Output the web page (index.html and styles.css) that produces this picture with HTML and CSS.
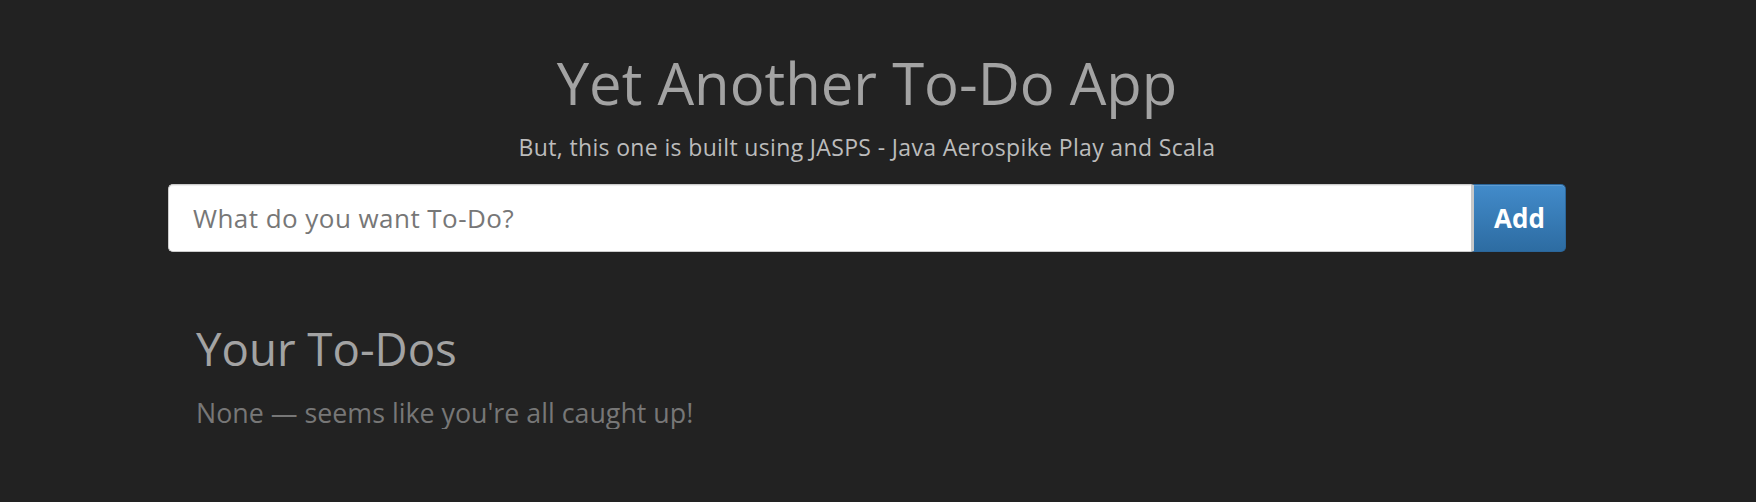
FILE: index.html
```html
<!DOCTYPE html>
<html lang="en">
<head>
<meta charset="utf-8">
<title>Yet Another To-Do App</title>
<link rel="stylesheet" href="styles.css">
</head>
<body>
<div class="app">
  <header class="hero">
    <h1 class="hero-title">Yet Another To-Do App</h1>
    <p class="hero-sub">But, this one is built using JASPS - Java Aerospike Play and Scala</p>
  </header>
  <form class="add-form">
    <input class="add-input" type="text" placeholder="What do you want To-Do?">
    <button class="add-btn" type="button">Add</button>
  </form>
  <section class="todos">
    <h2 class="todos-title">Your To-Dos</h2>
    <p class="todos-empty">None — seems like you're all caught up!</p>
  </section>
</div>
</body>
</html>
```
FILE: styles.css
```css
html, body {
  margin: 0;
  padding: 0;
  background: #222222;
}
body {
  font-family: "Trebuchet MS", "Open Sans", Lato, sans-serif;
  color: #a0a0a0;
}
.app {
  padding: 48px 190px 0 168px;
}
.hero {
  text-align: center;
}
.hero-title {
  margin: 0;
  font-size: 58px;
  line-height: 70px;
  font-weight: 400;
  color: #a3a3a3;
}
.hero-sub {
  margin: 16px 0 0;
  font-size: 23px;
  line-height: 26px;
  letter-spacing: 0.35px;
  color: #bcbcbc;
}
.add-form {
  display: flex;
  margin-top: 24px;
  height: 68px;
}
.add-input {
  flex: 1;
  box-sizing: border-box;
  height: 68px;
  margin: 0;
  padding: 0 24px;
  border: 1px solid #cccccc;
  border-right: 0;
  border-radius: 5px 0 0 5px;
  background: #ffffff;
  box-shadow: inset 0 1px 1px rgba(0,0,0,0.075);
  font-family: inherit;
  font-size: 26px;
  letter-spacing: 0.45px;
  color: #555;
  outline: none;
}
.add-input::placeholder {
  color: #777777;
}
.add-btn {
  box-sizing: border-box;
  width: 95px;
  height: 68px;
  margin: 0;
  padding: 0;
  border: 1px solid #2b669a;
  border-left: 3px solid #c8c8c8;
  border-radius: 0 5px 5px 0;
  background: linear-gradient(to bottom, #428bca 0%, #2d6ca2 100%);
  box-shadow: inset 0 1px 0 rgba(255,255,255,0.15);
  font-family: inherit;
  font-size: 26px;
  font-weight: 700;
  color: #ffffff;
}
.todos {
  padding: 0 28px;
  margin-top: 68px;
}
.todos-title {
  margin: 0;
  font-size: 45.6px;
  line-height: 56px;
  font-weight: 400;
  color: #a3a3a3;
}
.todos-empty {
  margin: 21px 0 0;
  font-size: 26.8px;
  line-height: 32px;
  color: #777777;
}
```
